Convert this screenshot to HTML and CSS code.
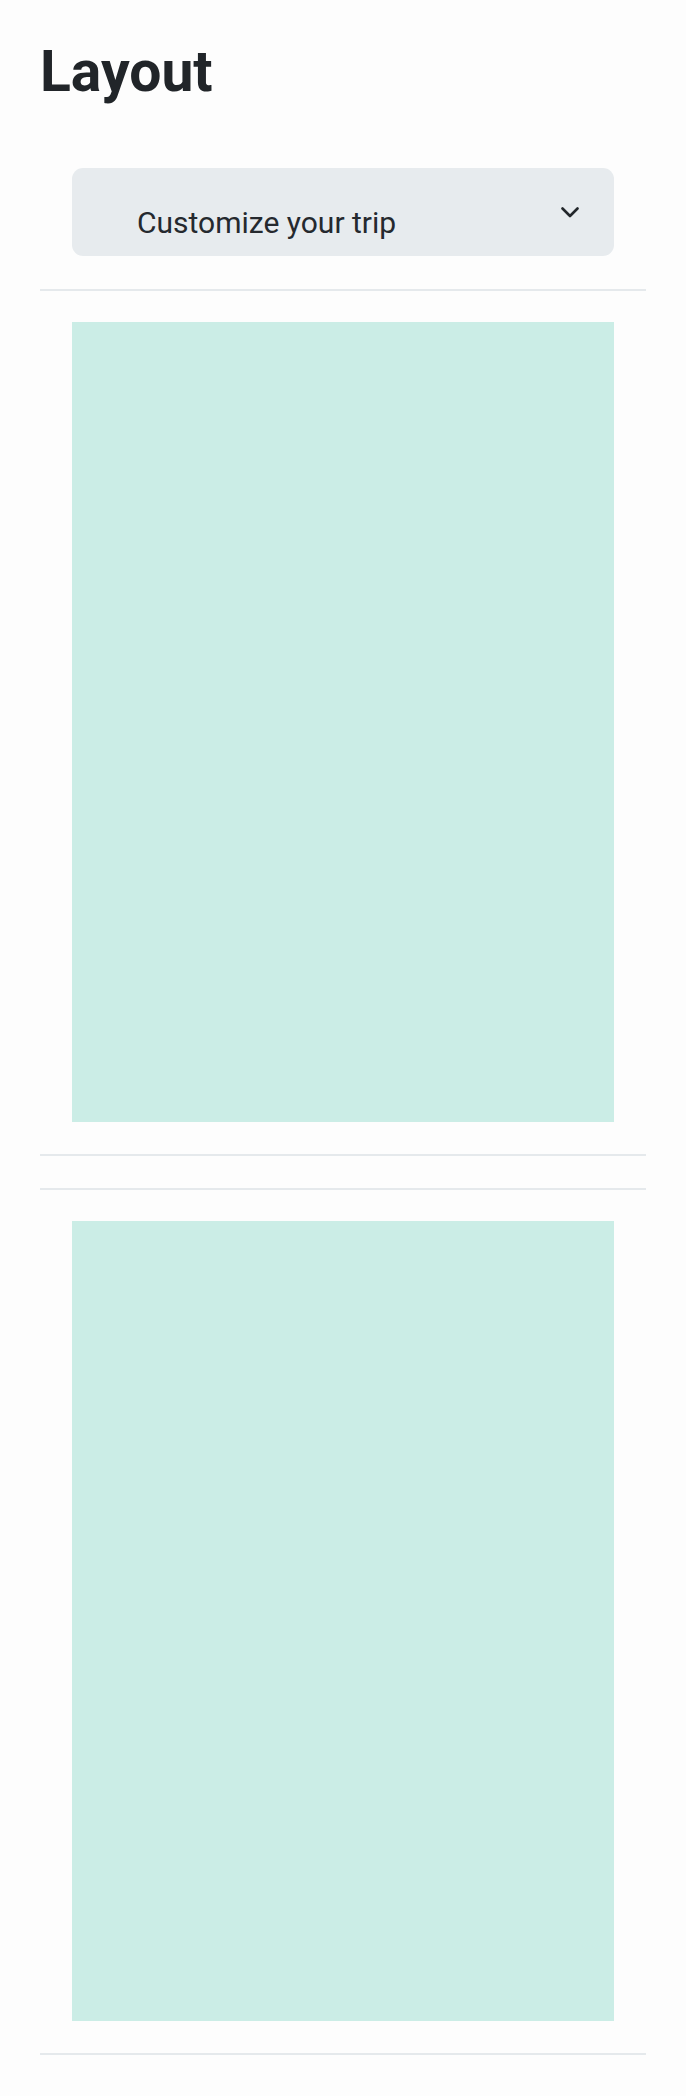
FILE: index.html
```html
<!DOCTYPE html>
<html lang="en">
<head>
    <meta charset="UTF-8">
    <meta name="viewport" content="width=device-width, initial-scale=1.0">
    <title>Layout</title>
    <link rel="stylesheet" href="styles.css">
</head>
<body>
    <div class="page">
        <h1>Layout</h1>

        <div class="trip-toggle">
            <span class="trip-label">Customize your trip</span>
            <svg class="chevron" width="18" height="11" viewBox="0 0 18 11">
                <polyline points="1.5,1.5 9,9 16.5,1.5" fill="none" stroke="#23272b" stroke-width="2.6" stroke-linecap="round" stroke-linejoin="round"/>
            </svg>
        </div>

        <section class="panel">
            <div class="panel-box"></div>
        </section>

        <section class="panel">
            <div class="panel-box"></div>
        </section>
    </div>
</body>
</html>
```

FILE: styles.css
```css
body {
    margin: 0;
    font-family: Roboto, "Liberation Sans", sans-serif;
    background-color: #fdfdfd;
    color: #212529;
}

.page {
    padding: 38px 40px 0;
}

h1 {
    margin: 0;
    font-size: 57px;
    font-weight: 700;
    line-height: 1.2;
}

.trip-toggle {
    display: flex;
    align-items: center;
    justify-content: space-between;
    height: 88px;
    margin: 62px 32px 0;
    padding: 0 35px 0 65px;
    background-color: #e7ebee;
    border-radius: 11px;
}

.trip-label {
    margin-top: 22px;
    font-size: 30px;
    line-height: 1.2;
    color: #25292e;
}

.chevron {
    display: block;
}

.panel {
    margin-top: 33px;
    padding: 31px 32px 32px;
    border-top: 2px solid #e5e9ec;
    border-bottom: 2px solid #e5e9ec;
}

.panel + .panel {
    margin-top: 32px;
}

.panel-box {
    height: 800px;
    background-color: #cbede6;
}
```
